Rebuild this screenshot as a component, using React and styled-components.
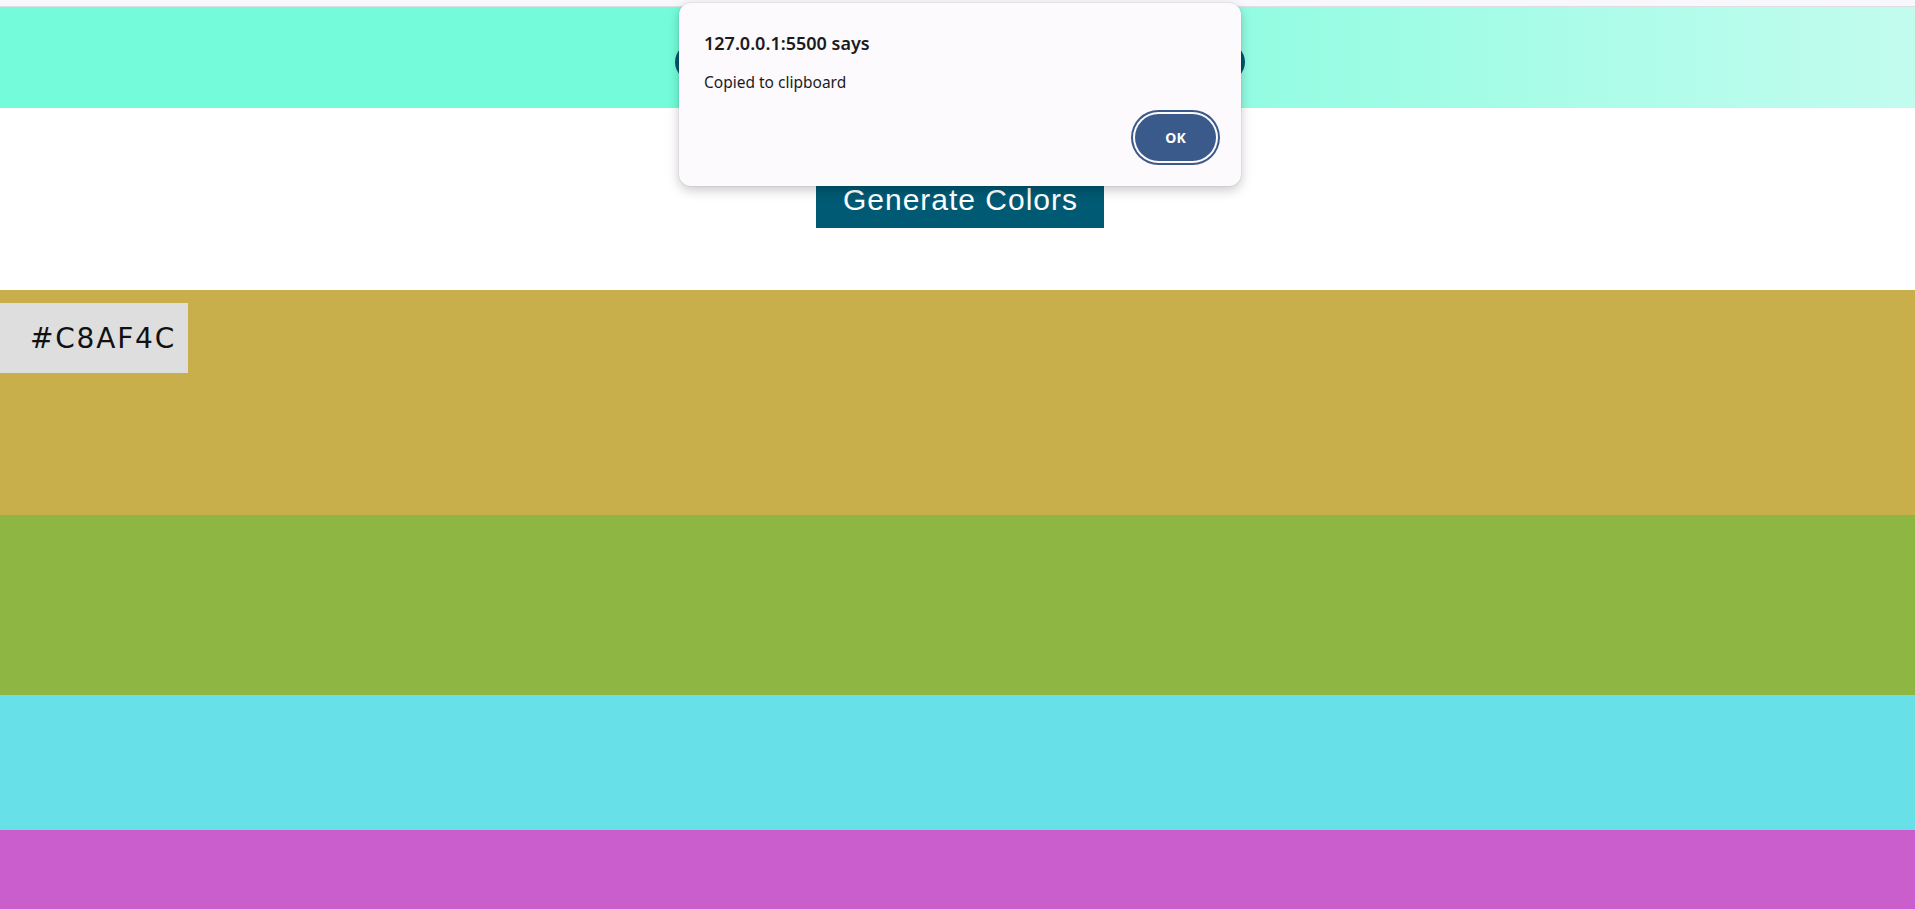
import React, { useState } from "react";
import styled, { createGlobalStyle } from "styled-components";

const GlobalStyle = createGlobalStyle`
  * {
    box-sizing: border-box;
  }

  html,
  body {
    margin: 0;
    padding: 0;
    overflow: hidden;
    background: #ffffff;
    font-family: "Liberation Sans", Arial, sans-serif;
  }
`;

const palette = [
  { hex: "#C8AF4C", height: 225 },
  { hex: "#8DB642", height: 180 },
  { hex: "#68E0E7", height: 135 },
  { hex: "#CA5ECD", height: 90 },
  { hex: "#E07A5F", height: 45 },
];

const App = () => {
  const [copied] = useState(palette[0].hex);

  return (
    <>
      <GlobalStyle />
      <Page>
        <TopStrip />
        <Header>
          <Title>Color Palette Generator</Title>
        </Header>

        <Controls>
          <GenerateBtn>Generate Colors</GenerateBtn>
        </Controls>

        <Bands>
          {palette.map((color) => (
            <Band key={color.hex} $bg={color.hex} $height={color.height}>
              {color.hex === copied && <HexLabel>{color.hex}</HexLabel>}
            </Band>
          ))}
        </Bands>

        <Dialog role="alertdialog">
          <DialogTitle>127.0.0.1:5500 says</DialogTitle>
          <DialogMessage>Copied to clipboard</DialogMessage>
          <DialogActions>
            <OkBtn>OK</OkBtn>
          </DialogActions>
        </Dialog>
      </Page>
    </>
  );
};

const Page = styled.div`
  position: relative;
  width: 100%;
  min-height: 909px;
`;

const TopStrip = styled.div`
  height: 7px;
  background: #f8f7fc;
  border-bottom: 1px solid #dddde6;
`;

const Header = styled.header`
  height: 101px;
  padding-top: 9px;
  display: flex;
  justify-content: center;
  align-items: center;
  background: linear-gradient(
    90deg,
    #74fcda 0%,
    #74fcda 42%,
    #c3fcef 100%
  );
`;

const Title = styled.h1`
  margin: 0 0 0 4px;
  width: 570px;
  height: 38px;
  border-radius: 19px;
  background: #00566d;
  color: #ffffff;
  font-size: 22px;
  line-height: 38px;
  text-align: center;
`;

const Controls = styled.section`
  display: flex;
  justify-content: center;
  padding: 62px 0;
`;

const GenerateBtn = styled.button`
  margin-left: 5px;
  border: none;
  background: #015a74;
  color: #ffffff;
  font-family: "Liberation Sans", Arial, sans-serif;
  font-size: 30px;
  letter-spacing: 1px;
  padding: 13px 26px 11px 27px;
  line-height: 34px;
  cursor: pointer;
`;

const Bands = styled.div`
  display: flex;
  flex-direction: column;
`;

const Band = styled.div`
  height: ${(p) => p.$height}px;
  background: ${(p) => p.$bg};
  padding-top: 13px;
`;

const HexLabel = styled.span`
  display: inline-flex;
  align-items: center;
  height: 70px;
  padding: 0 12px 0 30px;
  background: #dedede;
  color: #111111;
  font-family: "DejaVu Sans", sans-serif;
  font-size: 28px;
  letter-spacing: 1.8px;
`;

const Dialog = styled.div`
  position: absolute;
  top: 3px;
  left: 679px;
  width: 562px;
  height: 183px;
  padding: 28px 24px 24px 25px;
  display: flex;
  flex-direction: column;
  background: #fcfafd;
  border-radius: 12px;
  box-shadow: 0 4px 12px rgba(0, 0, 0, 0.22), 0 0 0 1px rgba(0, 0, 0, 0.04);
  font-family: "Noto Sans", "Open Sans", sans-serif;
  color: #1b1b1f;
`;

const DialogTitle = styled.div`
  font-size: 18px;
  font-weight: 600;
  line-height: 24px;
`;

const DialogMessage = styled.div`
  margin-top: 17px;
  font-size: 15.5px;
  line-height: 20px;
`;

const DialogActions = styled.div`
  margin-top: auto;
  display: flex;
  justify-content: flex-end;
`;

const OkBtn = styled.button`
  width: 81px;
  height: 47px;
  margin: 0 1px 1px 0;
  border: none;
  border-radius: 24px;
  background: #3a5a8c;
  color: #ffffff;
  font-family: "Noto Sans", "Open Sans", sans-serif;
  font-size: 14px;
  font-weight: 700;
  box-shadow: 0 0 0 2px #fcfafd, 0 0 0 4px #3a5a8c;
  cursor: pointer;
`;

export default App;
